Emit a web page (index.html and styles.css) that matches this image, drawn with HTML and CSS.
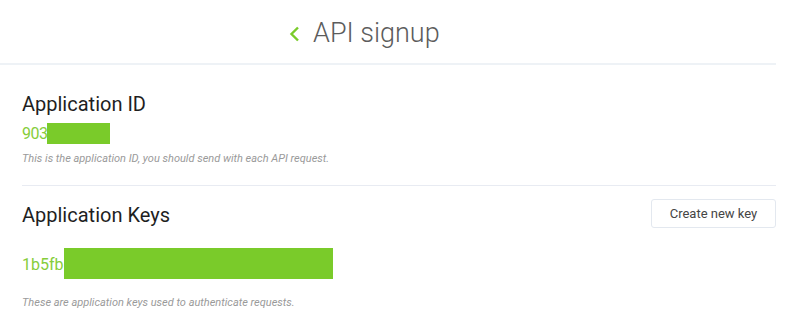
FILE: index.html
```html
<!DOCTYPE html>
<html lang="en">

<head>
  <meta charset="UTF-8" />
  <meta name="viewport" content="width=device-width, initial-scale=1.0" />
  <title>API signup</title>
  <link rel="stylesheet" href="styles.css">
</head>

<body>
  <div class="page">
    <header class="top-bar">
      <a href="#" class="back-link" aria-label="Back">
        <svg width="12" height="16" viewBox="0 0 12 16">
          <polyline points="9,1.5 2.5,8 9,14.5" fill="none" stroke="#7acb2a" stroke-width="2.4" />
        </svg>
      </a>
      <h1>API signup</h1>
    </header>

    <section class="block block-id">
      <h2>Application ID</h2>
      <div class="value-row row-id">
        <span class="value">903</span>
        <span class="redacted redacted-id"></span>
      </div>
      <p class="hint">This is the application ID, you should send with each API request.</p>
    </section>

    <section class="block block-keys">
      <div class="block-head">
        <h2>Application Keys</h2>
        <button type="button">Create new key</button>
      </div>
      <div class="value-row row-key">
        <span class="value">1b5fb</span>
        <span class="redacted redacted-key"></span>
      </div>
      <p class="hint">These are application keys used to authenticate requests.</p>
    </section>
  </div>
</body>

</html>
```

FILE: styles.css
```css
:root {
  --green: #7acb2a;
  --green-text: #86cd3a;
  --line: #eef2f6;
  --text-color: #1f1f1f;
  --muted: #9a9a9a;
}

* {
  box-sizing: border-box;
}

html,
body {
  margin: 0;
  padding: 0;
  background: #fff;
  font-family: Roboto, 'Liberation Sans', sans-serif;
  color: var(--text-color);
}

.page {
  width: 776px;
}

.top-bar {
  display: flex;
  align-items: center;
  height: 65px;
  padding: 3px 0 0 289px;
  border-bottom: 2px solid var(--line);
}

.back-link {
  display: flex;
  width: 12px;
  margin-right: 12px;
  margin-top: 1px;
}

h1 {
  margin: 0;
  font-size: 27px;
  font-weight: 300;
  color: #5c5c5c;
  line-height: 60px;
}

.block {
  margin-left: 22px;
}

.block-id {
  padding: 27px 0 19px;
  border-bottom: 1px solid #e8ebf2;
}

h2 {
  margin: 0;
  font-size: 20px;
  font-weight: 400;
  line-height: 24px;
}

.value-row {
  display: flex;
  align-items: center;
}

.value {
  font-size: 16px;
  color: var(--green-text);
}

.redacted {
  display: block;
  background: var(--green);
}

.row-id {
  margin-top: 7px;
  height: 21px;
  line-height: 21px;
}

.row-id .value {
  letter-spacing: -0.5px;
}

.redacted-id {
  width: 63px;
  height: 21px;
}

.hint {
  margin: 8px 0 0;
  font-size: 11px;
  font-style: italic;
  line-height: 14px;
  color: var(--muted);
}

.block-keys {
  padding-top: 13px;
}

.block-head {
  display: flex;
  justify-content: space-between;
  align-items: flex-start;
}

.block-head h2 {
  margin-top: 4px;
}

button {
  width: 125px;
  height: 29px;
  background: #fff;
  border: 1px solid #e3e8ef;
  border-radius: 3px;
  font-family: inherit;
  font-size: 13px;
  color: #454545;
  cursor: pointer;
}

.row-key {
  margin-top: 20px;
  height: 31px;
}

.row-key .value {
  margin-top: 2px;
}

.redacted-key {
  width: 269px;
  height: 31px;
}

.block-keys .hint {
  margin-top: 17px;
}
```
